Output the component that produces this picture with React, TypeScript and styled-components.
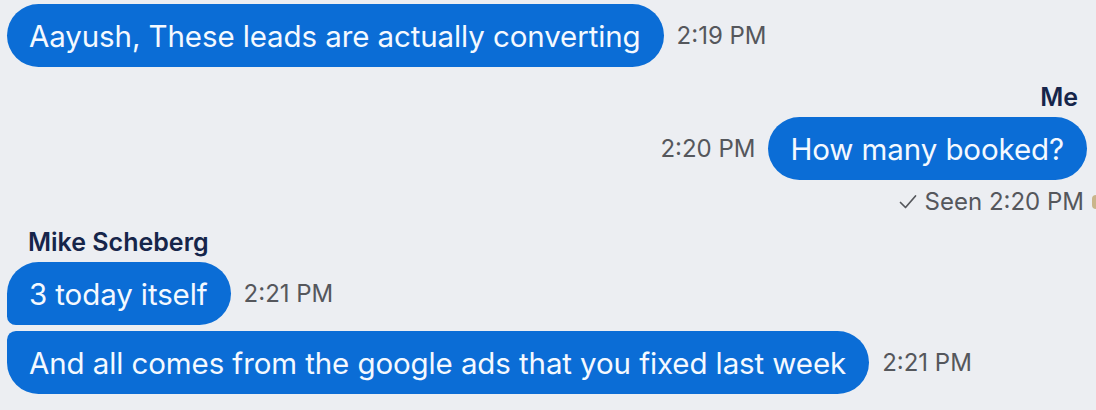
import React from "react";
import styled, { createGlobalStyle, css } from "styled-components";

type Side = "left" | "right";
type Shape = "single" | "first" | "last";

const GlobalStyle = createGlobalStyle`
  html, body {
    margin: 0;
    padding: 0;
    background: #eceef2;
    overflow: hidden;
  }
  body {
    font-family: Inter, "Noto Sans", "Liberation Sans", sans-serif;
    -webkit-font-smoothing: antialiased;
  }
`;

const Thread = styled.div`
  width: 1096px;
  height: 410px;
  box-sizing: border-box;
  padding: 4px 9px 0 7px;
  display: flex;
  flex-direction: column;
`;

const Row = styled.div<{ $side: Side; $gap: number }>`
  display: flex;
  align-items: center;
  gap: 13px;
  margin-top: ${(p) => p.$gap}px;
  justify-content: ${(p) => (p.$side === "right" ? "flex-end" : "flex-start")};
`;

const shapes = {
  single: css`
    border-radius: 32px;
  `,
  first: css`
    border-radius: 32px 32px 32px 9px;
  `,
  last: css`
    border-radius: 9px 32px 32px 32px;
  `,
};

const Bubble = styled.div<{ $shape: Shape }>`
  background: #0b6dd6;
  color: #f4f9ff;
  height: 63px;
  box-sizing: border-box;
  padding: 0 23px 0 22px;
  display: flex;
  align-items: center;
  font-size: 29.5px;
  letter-spacing: -0.1px;
  white-space: nowrap;
  ${(p) => shapes[p.$shape]}
`;

const Time = styled.span`
  color: #55575c;
  font-size: 24px;
  white-space: nowrap;
`;

const Sender = styled.div<{ $side: Side; $gap: number }>`
  font-size: 25px;
  font-weight: 600;
  line-height: 28px;
  color: #16254a;
  margin-top: ${(p) => p.$gap}px;
  align-self: ${(p) => (p.$side === "right" ? "flex-end" : "flex-start")};
  padding: ${(p) => (p.$side === "right" ? "0 9px 0 0" : "0 0 0 21px")};
`;

const Seen = styled.div`
  align-self: flex-end;
  margin-top: 8px;
  margin-right: -9px;
  display: flex;
  align-items: center;
  gap: 8px;
  font-size: 24px;
  line-height: 28px;
  color: #55575c;
`;

const Receipt = styled.span`
  display: inline-block;
  width: 4px;
  height: 14px;
  border-radius: 7px 0 0 7px;
  background: #c9b58a;
`;

const Check = () => (
  <svg width="18" height="16" viewBox="0 0 18 16" fill="none">
    <path d="M1.5 8.5 L6.5 13.5 L16.5 2" stroke="#55575c" strokeWidth="1.7" strokeLinecap="round" strokeLinejoin="round" />
  </svg>
);

const App = () => {
  return (
    <>
      <GlobalStyle />
      <Thread>
        <Row $side="left" $gap={0}>
          <Bubble $shape="single">Aayush, These leads are actually converting</Bubble>
          <Time>2:19 PM</Time>
        </Row>

        <Sender $side="right" $gap={16}>Me</Sender>
        <Row $side="right" $gap={6}>
          <Time>2:20 PM</Time>
          <Bubble $shape="single">How many booked?</Bubble>
        </Row>
        <Seen>
          <Check />
          <span>Seen 2:20 PM</span>
          <Receipt />
        </Seen>

        <Sender $side="left" $gap={12}>Mike Scheberg</Sender>
        <Row $side="left" $gap={6}>
          <Bubble $shape="first">3 today itself</Bubble>
          <Time>2:21 PM</Time>
        </Row>
        <Row $side="left" $gap={6}>
          <Bubble $shape="last">And all comes from the google ads that you fixed last week</Bubble>
          <Time>2:21 PM</Time>
        </Row>
      </Thread>
    </>
  );
};

export default App;
